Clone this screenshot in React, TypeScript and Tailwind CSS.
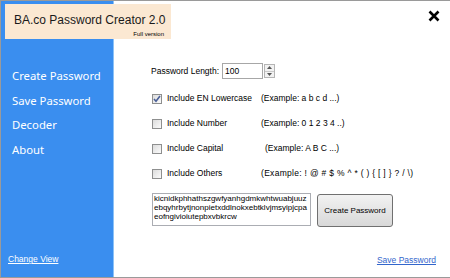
import {useState} from 'react'

const pwd = 'kicnidkphhathszgwfyanhgdmkwhtwuabjuuzebqyhrbytjnonpietxddlnokxebtklvjmsyipjcpaeofngivioiutepbxvbkrcw'

function Check({checked}: {checked?: boolean}) {
  return (
    <span className="w-[10px] h-[10px] border border-[#8e8f8f] bg-gradient-to-br from-[#dcdcdc] to-[#fbfbfb] flex items-center justify-center shrink-0">
      {checked && (
        <svg width="8" height="8" viewBox="0 0 8 8">
          <path d="M1 4 L3 6.2 L7 1" stroke="#4a5f97" strokeWidth="1.6" fill="none" />
        </svg>
      )}
    </span>
  )
}

function App() {
  const [len, setLen] = useState(100)
  const rows = [
    {label: 'Include EN Lowercase', ex: '(Example: a b c d ...)', checked: true, off: 'ml-0'},
    {label: 'Include Number', ex: '(Example: 0 1 2 3 4 ..)', checked: false, off: 'ml-0'},
    {label: 'Include Capital', ex: '(Example: A B C ...)', checked: false, off: 'ml-[4px]'},
    {label: 'Include Others', ex: '(Example: ! @ # $ % ^ * ( ) { [ ] } ? / \\)', checked: false, off: 'ml-0 tracking-[0.3px]'},
  ]
  return (
    <div className="w-[450px] h-[278px] bg-white border-t border-l border-b border-[#9a9a9a] relative flex font-['Liberation_Sans',Arial,sans-serif] overflow-hidden">
      {/* title plate */}
      <div className="absolute left-[4px] top-[3px] w-[166px] h-[35px] bg-[#fbe8d2] z-10">
        <div className="absolute left-[9px] top-[10px] text-[12px] leading-none text-[#1a1a1a] whitespace-nowrap">BA.co Password Creator 2.0</div>
        <div className="absolute right-[7px] top-[27px] text-[6px] leading-none text-black whitespace-nowrap">Full version</div>
      </div>

      <div className="w-[113px] h-full bg-[#3a8eef] border-r border-[#8cc2f7] flex flex-col pt-[63px] pl-[11px] text-white font-['Noto_Sans',sans-serif]">
        <div className="text-[11.3px] leading-[24.5px] whitespace-nowrap">Create Password</div>
        <div className="text-[11.3px] leading-[24.5px] whitespace-nowrap">Save Password</div>
        <div className="text-[11.3px] leading-[24.5px]">Decoder</div>
        <div className="text-[11.3px] leading-[24.5px]">About</div>
        <div className="mt-auto mb-[11px] -ml-[4px] text-[8.5px] underline font-['Liberation_Sans',sans-serif]">Change View</div>
      </div>

      <div className="flex-1 flex flex-col pl-[37px] pt-[62px] text-[8.5px] text-black relative">
        <button className="absolute right-[10px] top-[9px]">
          <svg width="12" height="12" viewBox="0 0 12 12">
            <path d="M1.5 1.5 L10.5 10.5 M10.5 1.5 L1.5 10.5" stroke="#000" strokeWidth="2.6" />
          </svg>
        </button>

        <div className="flex items-center h-[16px]">
          <span className="w-[71px]">Password Length:</span>
          <div className="flex items-center h-[16px]">
            <input
              value={len}
              onChange={e => setLen(Number(e.target.value) || 0)}
              className="w-[41px] h-[16px] border border-[#a7a7a7] px-[2px] text-[8.5px] outline-none"
            />
            <div className="ml-[1px] w-[11px] h-[14px] border border-[#b5b5b5] flex flex-col bg-[#f2f2f2]">
              <span className="flex-1 flex items-center justify-center border-b border-[#c9c9c9]">
                <svg width="5" height="3" viewBox="0 0 5 3"><path d="M0 3 L2.5 0 L5 3Z" fill="#555" /></svg>
              </span>
              <span className="flex-1 flex items-center justify-center">
                <svg width="5" height="3" viewBox="0 0 5 3"><path d="M0 0 L2.5 3 L5 0Z" fill="#555" /></svg>
              </span>
            </div>
          </div>
        </div>

        <div className="flex flex-col mt-[7px]">
          {rows.map((r, i) => (
            <div key={i} className="flex items-center h-[25px] pl-[1px]">
              <Check checked={r.checked} />
              <span className="ml-[5px] w-[94px]">{r.label}</span>
              <span className={r.off}>{r.ex}</span>
            </div>
          ))}
        </div>

        <div className="flex items-start mt-[7px] pl-[1px]">
          <textarea
            readOnly
            value={pwd}
            className="w-[159px] h-[33px] border border-[#abadb3] px-[1px] text-[8px] leading-[9px] resize-none overflow-hidden outline-none break-all"
          />
          <button className="ml-[6px] mt-[1px] w-[76px] h-[33px] border border-[#707070] rounded-[3px] bg-gradient-to-b from-[#f2f2f2] to-[#d8d8d8] text-[8px]">
            Create Password
          </button>
        </div>

        <div className="mt-auto mb-[10px] self-end mr-[14px] text-[8.5px] text-[#3366cc] underline">Save Password</div>
      </div>
    </div>
  )
}

export default App
